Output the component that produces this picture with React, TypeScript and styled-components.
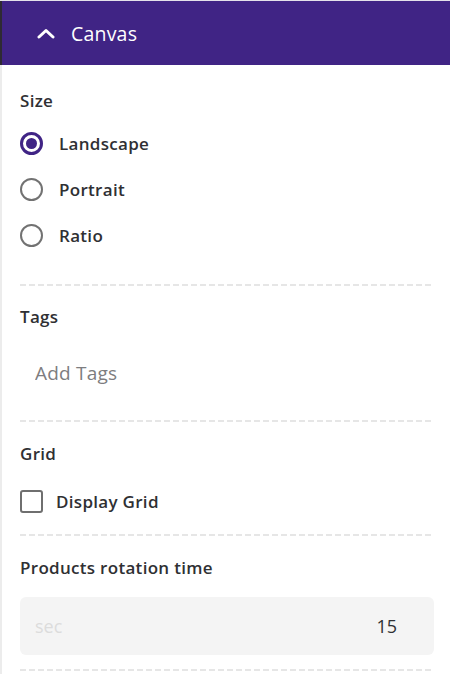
import { useState } from 'react';
import styled, { createGlobalStyle } from 'styled-components';

const GlobalStyle = createGlobalStyle`
  body {
    margin: 0;
    background: #ffffff;
    font-family: 'Open Sans', 'Noto Sans', sans-serif;
  }
  * {
    box-sizing: border-box;
  }
`;

const Panel = styled.div`
  width: 450px;
  height: 674px;
  overflow: hidden;
  border-top: 1px solid #e4e2ea;
  background: #ffffff;
`;

const Header = styled.div`
  height: 64px;
  display: flex;
  align-items: center;
  gap: 16px;
  padding-left: 35px;
  background: #402485;
  border-left: 2px solid #2e2a33;
  color: #ffffff;
  font-size: 19.5px;
  letter-spacing: 0.2px;
`;

const Body = styled.div`
  border-left: 2px solid #ececec;
  padding: 0 16px 0 18px;
  height: 100%;
`;

const Section = styled.div<{ $top: number; $bottom: number }>`
  padding-top: ${(p) => p.$top}px;
  padding-bottom: ${(p) => p.$bottom}px;
  background-image: repeating-linear-gradient(
    to right,
    #e6e6e6 0,
    #e6e6e6 6px,
    transparent 6px,
    transparent 9px
  );
  background-size: 100% 2px;
  background-repeat: no-repeat;
  background-position: left bottom;
`;

const Label = styled.div`
  font-size: 17px;
  line-height: 20px;
  font-weight: 600;
  letter-spacing: 0.3px;
  color: #2f3033;
`;

const RadioList = styled.div`
  display: flex;
  flex-direction: column;
  gap: 22px;
  margin-top: 20px;
`;

const Option = styled.label`
  display: flex;
  align-items: center;
  height: 24px;
  font-size: 17px;
  font-weight: 600;
  letter-spacing: 0.3px;
  color: #2f3033;
  cursor: pointer;
`;

const RadioDot = styled.span<{ $on: boolean }>`
  width: 23px;
  height: 23px;
  border-radius: 50%;
  border: ${(p) => (p.$on ? '3px solid #402485' : '2.5px solid #727272')};
  display: flex;
  align-items: center;
  justify-content: center;
  margin-right: 16px;
  &::after {
    content: '';
    width: 11px;
    height: 11px;
    border-radius: 50%;
    background: ${(p) => (p.$on ? '#402485' : 'transparent')};
  }
`;

const Box = styled.span`
  width: 23px;
  height: 23px;
  border-radius: 3px;
  border: 2.5px solid #6f6f6f;
  margin-right: 13px;
`;

const TagInput = styled.input`
  display: block;
  width: 100%;
  height: 44px;
  margin-top: 24px;
  border: none;
  outline: none;
  padding: 0 15px;
  font-family: inherit;
  font-size: 19px;
  letter-spacing: 0.2px;
  color: #2f3033;
  background: transparent;
  &::placeholder {
    color: #7d7d80;
  }
`;

const CheckRow = styled(Option)`
  margin-top: 25px;
`;

const NumberField = styled.div`
  display: flex;
  align-items: center;
  justify-content: space-between;
  height: 58px;
  margin-top: 19px;
  padding: 0 37px 0 15px;
  background: #f4f4f4;
  border-radius: 6px;
`;

const Unit = styled.span`
  font-size: 18px;
  color: #dcdcdc;
`;

const Value = styled.span`
  font-size: 18px;
  color: #2f3033;
`;

const Chevron = () => (
  <svg width="18" height="11" viewBox="0 0 18 11" fill="none">
    <path d="M2 9 L9 2.5 L16 9" stroke="#ffffff" strokeWidth="3" strokeLinecap="round" strokeLinejoin="round" />
  </svg>
);

const sizes = ['Landscape', 'Portrait', 'Ratio'];

export default function App() {
  const [size, setSize] = useState('Landscape');

  return (
    <>
      <GlobalStyle />
      <Panel>
        <Header>
          <Chevron />
          Canvas
        </Header>
        <Body>
          <Section $top={26} $bottom={39}>
            <Label>Size</Label>
            <RadioList>
              {sizes.map((s) => (
                <Option key={s} onClick={() => setSize(s)}>
                  <RadioDot $on={size === s} />
                  {s}
                </Option>
              ))}
            </RadioList>
          </Section>
          <Section $top={21} $bottom={27}>
            <Label>Tags</Label>
            <TagInput placeholder="Add Tags" />
          </Section>
          <Section $top={22} $bottom={23}>
            <Label>Grid</Label>
            <CheckRow>
              <Box />
              Display Grid
            </CheckRow>
          </Section>
          <Section $top={22} $bottom={16}>
            <Label>Products rotation time</Label>
            <NumberField>
              <Unit>sec</Unit>
              <Value>15</Value>
            </NumberField>
          </Section>
        </Body>
      </Panel>
    </>
  );
}
